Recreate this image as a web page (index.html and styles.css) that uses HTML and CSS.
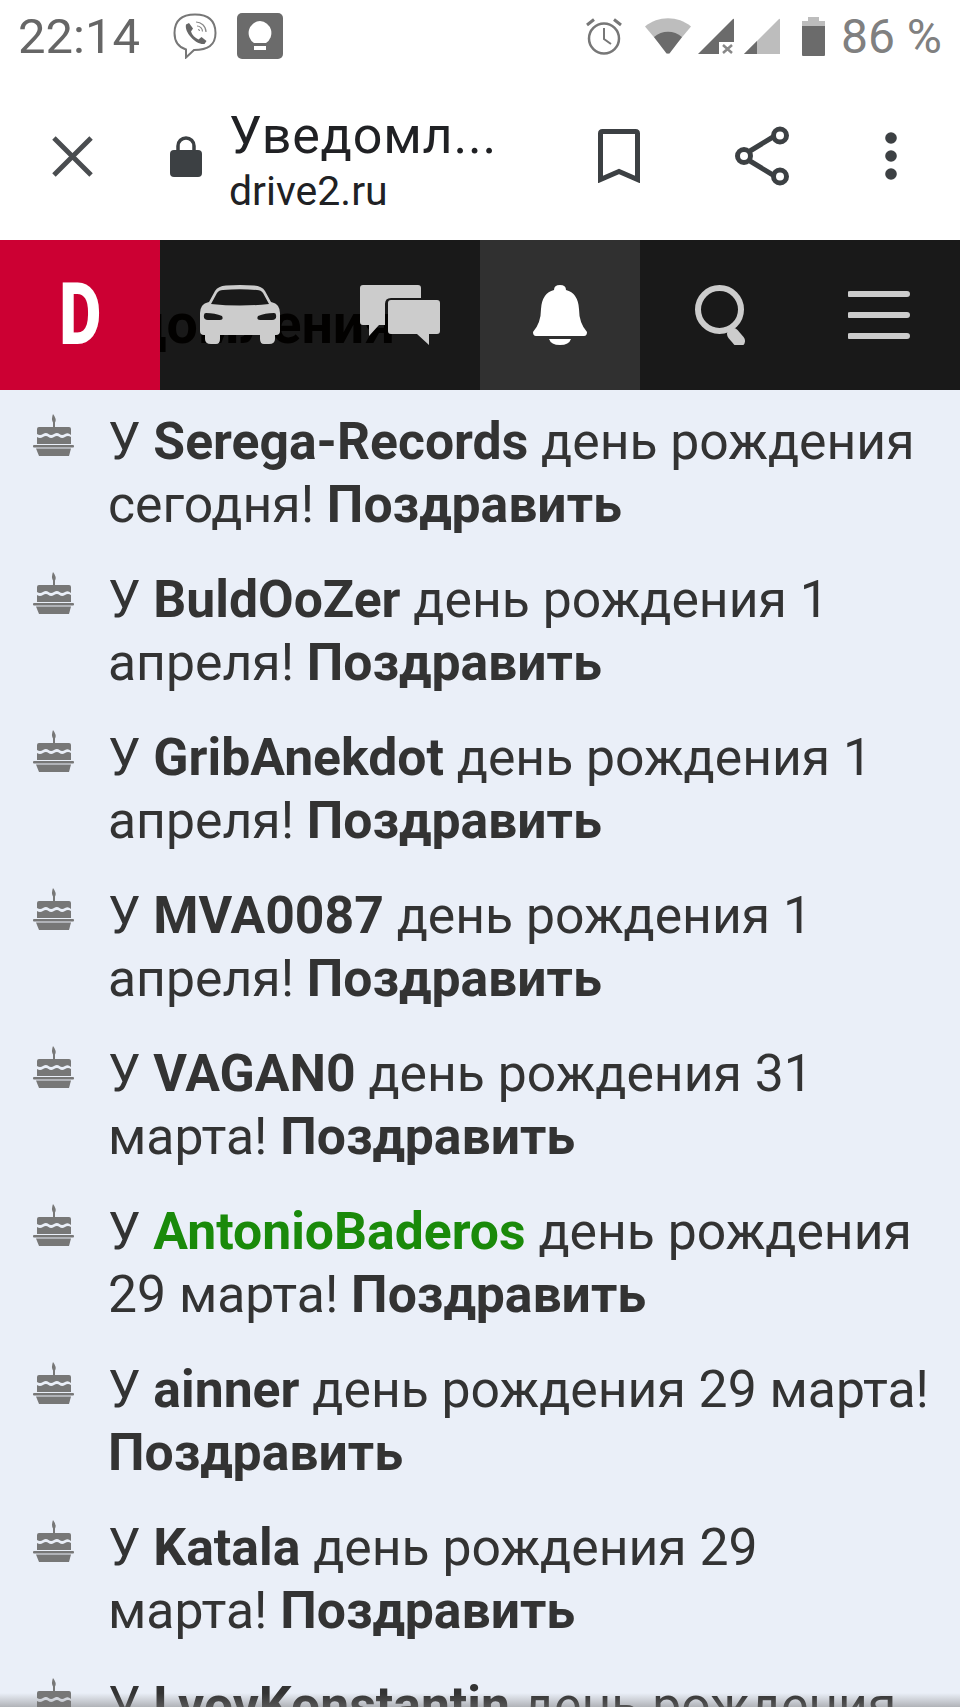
FILE: index.html
```html
<!DOCTYPE html>
<html lang="ru">
<head>
  <meta charset="UTF-8" />
  <meta name="viewport" content="width=device-width, initial-scale=1.0"/>
  <title>Уведомления</title>
  <link rel="stylesheet" href="styles.css">
</head>
<body>

  <div class="status-bar">
    <div class="status-left">
      <span class="clock">22:14</span>
      <svg class="viber" viewBox="0 0 44 46" fill="none" stroke="#777" stroke-width="2">
        <path d="M22 1.500C33 1.500 42.500 5 42.500 20C42.500 33 34 37 21 37L13 44.500V36.500C5 34 1.500 29 1.500 20C1.500 6 11 1.500 22 1.500Z"/>
        <path d="M13 11.500L16 10L20 15.500L18 18.500C19 22 22 25 25.500 26.500L28.500 24L33.500 28L31.500 31C24 32.500 11 20 13 11.500Z" fill="#666" stroke="none"/>
        <path d="M23 9C28 9 33 13 33 19M24 13C27 13 29.500 15.500 29.500 18.500M25 16.500C26 16.500 26.500 17 26.500 18" stroke="#888" stroke-width="1.200"/>
      </svg>
      <svg class="keep" viewBox="0 0 46 46">
        <rect width="46" height="46" rx="5" fill="#6b6b6b"/>
        <path d="M23 8A12 12 0 0 1 29 30H17A12 12 0 0 1 23 8Z" fill="#fff"/>
        <rect x="17" y="33" width="12" height="4" fill="#fff"/>
      </svg>
    </div>
    <div class="status-right">
      <svg class="alarm" viewBox="0 0 36 38" fill="none" stroke="#777" stroke-width="2.500">
        <circle cx="18" cy="21.500" r="15"/>
        <path d="M18 11V22L25 27" stroke-width="2"/>
        <path d="M1 8L8 2.500M35 8L28 2.500" stroke-width="3"/>
      </svg>
      <svg class="wifi" viewBox="0 0 46 36">
        <path d="M0 8.500C13-2.500 33-2.500 46 8.500L23 36Z" fill="#bdbdbd"/>
        <path d="M9 19C17 12 29 12 37 19L24.500 35.500H21.500Z" fill="#6b6b6b"/>
      </svg>
      <svg class="signal" viewBox="0 0 36 36">
        <path d="M0 36L35 1Q36 0 36 2V24H21V36Z" fill="#6b6b6b"/>
        <path d="M25 27L34 35M34 27L25 35" stroke="#888" stroke-width="2.500"/>
      </svg>
      <svg class="signal" viewBox="0 0 36 36">
        <path d="M0 36L35 1Q36 0 36 2V36Z" fill="#bdbdbd"/>
        <path d="M0 36L13 23V36Z" fill="#6b6b6b"/>
      </svg>
      <svg class="battery" viewBox="0 0 23 39">
        <path d="M6 0H17V4H23V9H0V4H6Z" fill="#bdbdbd"/>
        <path d="M0 9H23V38Q23 39 22 39H1Q0 39 0 38Z" fill="#6b6b6b"/>
      </svg>
      <span class="battery-text">86 %</span>
    </div>
  </div>

  <div class="toolbar">
    <svg class="close-icon" viewBox="0 0 42 42" fill="none" stroke="#4a4d50" stroke-width="5">
      <path d="M2 2L40 40M40 2L2 40"/>
    </svg>
    <svg class="lock-icon" viewBox="0 0 32 42">
      <path d="M8 17V11A8 8 0 0 1 24 11V17" fill="none" stroke="#3c4043" stroke-width="3.500"/>
      <rect y="15" width="32" height="27" rx="4" fill="#3c4043"/>
    </svg>
    <div class="page-info">
      <div class="page-title">Уведомл...</div>
      <div class="page-url">drive2.ru</div>
    </div>
    <svg class="bookmark-icon" viewBox="0 0 42 54" fill="none" stroke="#3c4043" stroke-width="5">
      <path d="M2.500 50.500V4.500Q2.500 2.500 4.500 2.500H37.500Q39.500 2.500 39.500 4.500V50.500L21 42.500Z"/>
    </svg>
    <svg class="share-icon" viewBox="0 0 55 60" fill="none" stroke="#3c4043" stroke-width="5">
      <path d="M15 25L38 11M15 35L38 49"/>
      <circle cx="9" cy="30" r="6.500"/>
      <circle cx="45" cy="9.500" r="6.500"/>
      <circle cx="45" cy="50.500" r="6.500"/>
    </svg>
    <svg class="more-icon" viewBox="0 0 12 48" fill="#3c4043">
      <circle cx="6" cy="6" r="5.800"/>
      <circle cx="6" cy="24" r="5.800"/>
      <circle cx="6" cy="42" r="5.800"/>
    </svg>
  </div>

  <div class="content">
    <nav class="site-nav">
      <a class="nav-logo"><span>D</span></a>
      <a class="nav-item">
        <svg width="80" height="60" viewBox="0 0 80 60" fill="#ccc">
          <path d="M26 0.500Q40-0.500 54 0.500Q62 1 65 6L71 17Q76 18 78 21Q80 24 80 28V46Q80 50 76 50H75V54Q75 59 69 59H64Q60 59 60 54V50H20V54Q20 59 16 59H11Q5 59 5 54V50H4Q0 50 0 46V28Q0 24 2 21Q4 18 9 17L15 6Q18 1 26 0.500Z"/>
          <path d="M11 19Q40 22 69 19L63 8Q61 5 57 5Q40 3.500 23 5Q19 5 17 8Z" fill="#191919"/>
          <path d="M6 28Q15 28 22 31Q24 35 20 35H8Q3 35 4 30Q4 28 6 28Z M74 28Q65 28 58 31Q56 35 60 35H72Q77 35 76 30Q76 28 74 28Z" fill="#191919"/>
        </svg>
      </a>
      <a class="nav-item">
        <svg width="80" height="60" viewBox="0 0 80 60" fill="#ccc">
          <path d="M3 0H58Q61 0 61 3V13H31Q25 13 25 19V40H19L9 51V40H3Q0 40 0 37V3Q0 0 3 0Z"/>
          <path d="M31 15H77Q80 15 80 18V46Q80 49 77 49H69V60L57 49H31Q28 49 28 46V18Q28 15 31 15Z"/>
        </svg>
      </a>
      <a class="nav-item nav-active">
        <svg width="54" height="60" viewBox="0 0 54 60" fill="#fff">
          <path d="M27 0Q33 0 33 5Q45 8 46 24Q46 38 54 47Q54 51 51 51H3Q0 51 0 47Q8 38 8 24Q9 8 21 5Q21 0 27 0Z"/>
          <path d="M16 54H38Q36 60 27 60Q18 60 16 54Z"/>
        </svg>
      </a>
      <a class="nav-item">
        <svg width="50" height="60" viewBox="0 0 50 60" fill="none" stroke="#ccc">
          <circle cx="24.500" cy="24.500" r="21.500" stroke-width="6"/>
          <path d="M38 49L44 56" stroke-width="12" stroke-linecap="round"/>
        </svg>
      </a>
      <a class="nav-item">
        <svg width="64" height="48" viewBox="0 0 64 48" fill="none" stroke="#ccc" stroke-width="6" stroke-linecap="round">
          <path d="M2 3H59M2 24H59M2 45H59"/>
        </svg>
      </a>
    </nav>

    <h1 class="page-heading">Уведомления</h1>

    <ul class="notify-list">
      <li class="notify-row">
        <svg class="cake"><use href="#cake-icon"/></svg>
        <p>У <a>Serega-Records</a> день рождения сегодня! <a>Поздравить</a></p>
      </li>
      <li class="notify-row">
        <svg class="cake"><use href="#cake-icon"/></svg>
        <p>У <a>BuldOoZer</a> день рождения 1 апреля! <a>Поздравить</a></p>
      </li>
      <li class="notify-row">
        <svg class="cake"><use href="#cake-icon"/></svg>
        <p>У <a>GribAnekdot</a> день рождения 1 апреля! <a>Поздравить</a></p>
      </li>
      <li class="notify-row">
        <svg class="cake"><use href="#cake-icon"/></svg>
        <p>У <a>MVA0087</a> день рождения 1 апреля! <a>Поздравить</a></p>
      </li>
      <li class="notify-row">
        <svg class="cake"><use href="#cake-icon"/></svg>
        <p>У <a>VAGAN0</a> день рождения 31 марта! <a>Поздравить</a></p>
      </li>
      <li class="notify-row">
        <svg class="cake"><use href="#cake-icon"/></svg>
        <p>У <a class="online">AntonioBaderos</a> день рождения 29 марта! <a>Поздравить</a></p>
      </li>
      <li class="notify-row">
        <svg class="cake"><use href="#cake-icon"/></svg>
        <p>У <a>ainner</a> день рождения 29 марта! <a>Поздравить</a></p>
      </li>
      <li class="notify-row">
        <svg class="cake"><use href="#cake-icon"/></svg>
        <p>У <a>Katala</a> день рождения 29<br>марта! <a>Поздравить</a></p>
      </li>
      <li class="notify-row">
        <svg class="cake"><use href="#cake-icon"/></svg>
        <p>У <a>LvovKonstantin</a> день рождения 29 марта! <a>Поздравить</a></p>
      </li>
    </ul>
    <div class="bottom-shade"></div>
  </div>

  <svg class="icon-defs" width="0" height="0">
    <symbol id="cake-icon" viewBox="0 0 42 42">
      <path d="M20 0Q24 5 22 8.500V13H20V8.500Q18 5 20 0Z"/>
      <path d="M6 13H36Q38 13 38 15V21Q35 18 32 20Q29 22 26.500 20Q24 18 21 20Q18 22 15.500 20Q13 18 10 20Q7 22 4 20V15Q4 13 6 13Z"/>
      <path d="M4 23Q7 25 10 23Q13 21 15.500 23Q18 25 21 23Q24 21 26.500 23Q29 25 32 23Q35 21 38 23V30H4Z"/>
      <rect y="31" width="41" height="2.500" rx="1"/>
      <path d="M3 34.500H38L36 42H6Z"/>
    </symbol>
  </svg>

</body>
</html>
```

FILE: styles.css
```css
* { box-sizing: border-box; margin: 0; padding: 0; }

html, body {
  height: 1707px;
  overflow: hidden;
}

body {
  font-family: Roboto, sans-serif;
  background: #eaeff8;
  color: #333;
}

/* android status bar */
.status-bar {
  height: 72px;
  background: #fff;
  padding: 0 18px;
  display: flex;
  align-items: center;
  justify-content: space-between;
}

.status-left, .status-right {
  display: flex;
  align-items: center;
}

.clock {
  font-size: 49px;
  color: #666;
  margin-right: 33px;
}

.viber { width: 44px; height: 46px; margin-right: 20px; }
.keep { width: 46px; height: 46px; }

.alarm { width: 36px; height: 38px; margin-right: 23px; }
.wifi { width: 46px; height: 36px; margin-right: 7px; }
.signal { width: 36px; height: 36px; margin-right: 10px; }
.battery { width: 23px; height: 39px; margin: 0 16px 0 12px; }

.battery-text {
  font-size: 48px;
  color: #808080;
  white-space: nowrap;
}

/* custom tab toolbar */
.toolbar {
  height: 168px;
  background: #fff;
  display: flex;
  align-items: center;
  padding-left: 52px;
}

.close-icon { width: 41px; height: 41px; margin-right: 77px; }
.lock-icon { width: 32px; height: 42px; margin: 0 27px 0 0; }

.page-info {
  width: 369px;
  margin-top: 12px;
}

.page-title {
  font-size: 52px;
  line-height: 58px;
  color: #202124;
  letter-spacing: 0.8px;
}

.page-url {
  font-size: 41px;
  line-height: 52px;
  color: #202124;
}

.bookmark-icon { width: 42px; height: 54px; margin-right: 95px; }
.share-icon { width: 55px; height: 60px; margin-right: 95px; }
.more-icon { width: 12px; height: 48px; }

/* page */
.content {
  position: relative;
  height: 1467px;
  overflow: hidden;
}

.site-nav {
  position: absolute;
  top: 0;
  left: 0;
  right: 0;
  height: 150px;
  background: rgba(2, 1, 0, 0.9);
  display: grid;
  grid-template-columns: repeat(6, 160px);
}

.nav-logo {
  background: #cc0033;
  color: #fff;
  font-size: 84px;
  font-weight: 700;
  line-height: 150px;
  text-align: center;
}

.nav-logo span {
  display: inline-block;
  transform: scaleX(0.76);
  -webkit-text-stroke: 2px #fff;
}

.nav-item {
  display: flex;
  align-items: center;
  justify-content: center;
}

.nav-active { background: #303030; }

.page-heading {
  font-size: 55.5px;
  font-weight: 700;
  color: #000;
  line-height: 60px;
  padding: 55px 0 0 36px;
}

.notify-list {
  list-style: none;
  padding: 55px 20px 0 33px;
}

.notify-row {
  display: flex;
  align-items: flex-start;
  margin-bottom: 32px;
}

.cake {
  flex: none;
  width: 42px;
  height: 42px;
  margin: 4px 33px 0 0;
  fill: #777;
}

.notify-row p {
  font-size: 51.7px;
  line-height: 63px;
  color: #333;
}

.notify-row a {
  font-weight: 700;
}

.notify-row a.online { color: #1a8a0a; }

.bottom-shade {
  position: absolute;
  left: 0;
  right: 0;
  bottom: 0;
  height: 14px;
  background: linear-gradient(rgba(120, 120, 120, 0), rgba(120, 120, 120, 0.5));
}

.icon-defs { position: absolute; }
```
